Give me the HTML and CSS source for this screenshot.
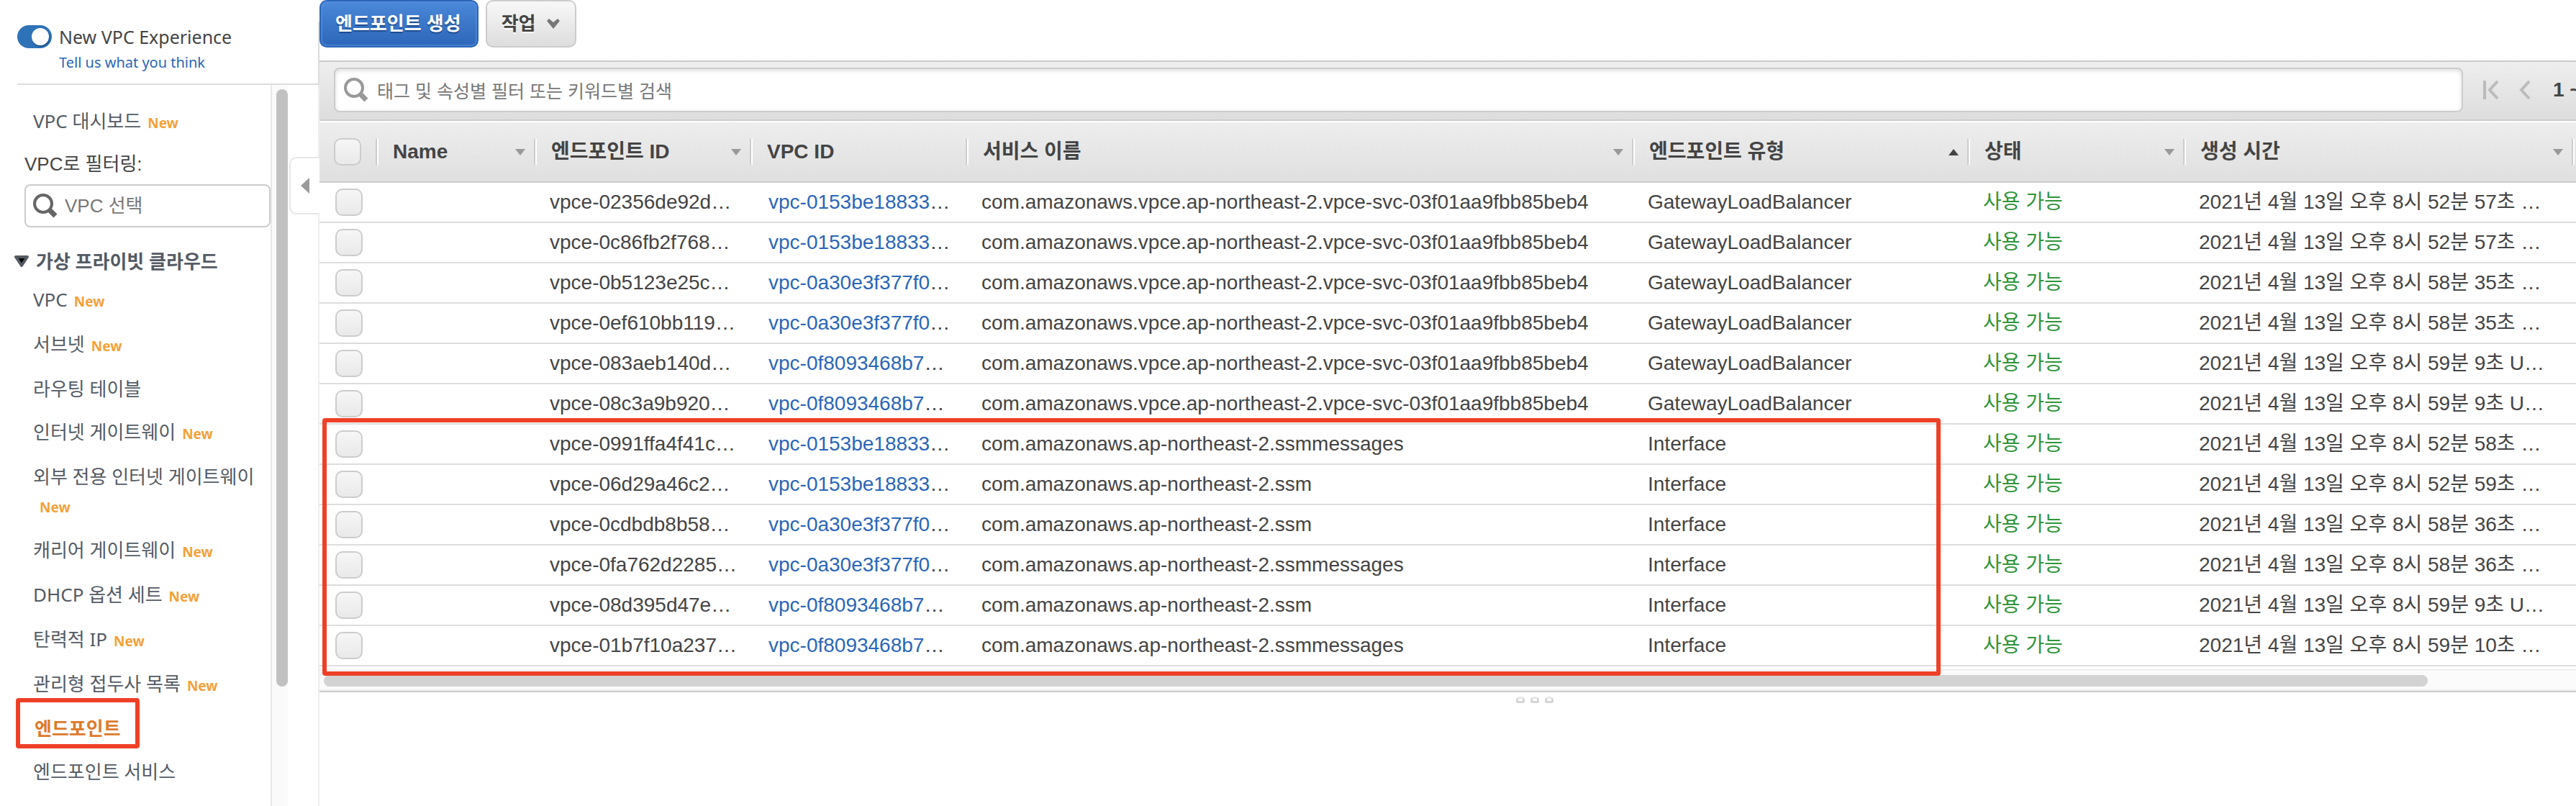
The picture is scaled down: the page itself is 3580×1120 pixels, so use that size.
FILE: index.html
```html
<!DOCTYPE html>
<html lang="ko">
<head>
<meta charset="utf-8">
<title>VPC 엔드포인트</title>
<link rel="stylesheet" href="styles.css">
</head>
<body>
<div class="app">
  <aside class="sidebar">
    <header class="experience">
      <label class="switch"><input type="checkbox" class="switch-input" checked><span>New VPC Experience</span></label>
      <a class="feedback" href="#">Tell us what you think</a>
    </header>
    <div class="sidebar-body">
      <nav class="nav">
        <ul class="nav-list nav-top">
          <li class="has-new"><a href="#">VPC 대시보드</a><span class="new">New</span></li>
        </ul>
        <label class="filter-label" for="vpc-filter">VPC로 필터링:</label>
        <div class="vpc-filter">
          <svg class="glass" viewBox="0 0 34 34" aria-hidden="true"><circle cx="14" cy="14" r="12"/><path d="M22 22l9 9"/></svg>
          <input id="vpc-filter" type="text" placeholder="VPC 선택">
        </div>
        <h2 class="group"><svg class="caret" viewBox="0 0 20 16" aria-hidden="true"><path d="M2 2h16l-8 12z"/></svg>가상 프라이빗 클라우드</h2>
        <ul class="nav-list">
          <li class="has-new"><a href="#">VPC</a><span class="new">New</span></li>
          <li class="has-new"><a href="#">서브넷</a><span class="new">New</span></li>
          <li><a href="#">라우팅 테이블</a></li>
          <li class="has-new"><a href="#">인터넷 게이트웨이</a><span class="new">New</span></li>
          <li class="has-new"><a href="#">외부 전용 인터넷 게이트웨이</a><span class="new">New</span></li>
          <li class="has-new"><a href="#">캐리어 게이트웨이</a><span class="new">New</span></li>
          <li class="has-new"><a href="#">DHCP 옵션 세트</a><span class="new">New</span></li>
          <li class="has-new"><a href="#">탄력적 IP</a><span class="new">New</span></li>
          <li class="has-new"><a href="#">관리형 접두사 목록</a><span class="new">New</span></li>
          <li class="current"><a href="#" aria-current="page">엔드포인트</a></li>
          <li><a href="#">엔드포인트 서비스</a></li>
          <li><a href="#">NAT 게이트웨이</a></li>
        </ul>
      </nav>
      <div class="track"><div class="thumb"></div></div>
    </div>
    <button class="collapse" type="button" aria-label="접기"><svg viewBox="0 0 12 22" aria-hidden="true"><path d="M12 0v22L0 11z"/></svg></button>
  </aside>

  <main class="main">
    <div class="toolbar">
      <button class="btn primary" type="button">엔드포인트 생성</button>
      <button class="btn" type="button">작업<svg class="chevron" viewBox="0 0 20 14" aria-hidden="true"><path d="M1 3l3-3 6 5 6-5 3 3-9 11z"/></svg></button>
    </div>
    <div class="filterbar">
      <div class="search">
        <svg class="glass light" viewBox="0 0 34 34" aria-hidden="true"><circle cx="14" cy="14" r="12"/><path d="M22 22l9 9"/></svg>
        <input type="text" aria-label="검색" placeholder="태그 및 속성별 필터 또는 키워드별 검색">
      </div>
      <div class="pager">
        <button type="button" aria-label="처음"><svg width="22" height="28" viewBox="0 0 22 28"><path d="M2 1v26M20 2L9 14l11 12"/></svg></button>
        <button type="button" aria-label="이전"><svg width="16" height="28" viewBox="0 0 16 28"><path d="M14 2L3 14l11 12"/></svg></button>
        <span class="range">1 ~</span>
      </div>
    </div>
    <div class="grid">
      <table>
        <colgroup><col class="c-check"><col class="c-name"><col class="c-mid"><col class="c-mid"><col><col class="c-type"><col class="c-mid"><col class="c-time"><col class="c-end"></colgroup>
        <thead>
          <tr>
            <th class="check"><input type="checkbox" aria-label="모두 선택"></th>
            <th><div class="head">Name<i class="sort"></i></div></th>
            <th><div class="head">엔드포인트 ID<i class="sort"></i></div></th>
            <th><div class="head">VPC ID</div></th>
            <th><div class="head">서비스 이름<i class="sort"></i></div></th>
            <th><div class="head">엔드포인트 유형<i class="sort up"></i></div></th>
            <th><div class="head">상태<i class="sort"></i></div></th>
            <th><div class="head">생성 시간<i class="sort"></i></div></th>
            <th><div class="head"></div></th>
          </tr>
        </thead>
        <tbody>
          <tr><td class="check"><input type="checkbox" aria-label="선택"></td><td></td><td>vpce-02356de92d…</td><td><a href="#">vpc-0153be18833</a>…</td><td>com.amazonaws.vpce.ap-northeast-2.vpce-svc-03f01aa9fbb85beb4</td><td>GatewayLoadBalancer</td><td class="ok">사용 가능</td><td>2021년 4월 13일 오후 8시 52분 57초 …</td><td></td></tr>
          <tr><td class="check"><input type="checkbox" aria-label="선택"></td><td></td><td>vpce-0c86fb2f768…</td><td><a href="#">vpc-0153be18833</a>…</td><td>com.amazonaws.vpce.ap-northeast-2.vpce-svc-03f01aa9fbb85beb4</td><td>GatewayLoadBalancer</td><td class="ok">사용 가능</td><td>2021년 4월 13일 오후 8시 52분 57초 …</td><td></td></tr>
          <tr><td class="check"><input type="checkbox" aria-label="선택"></td><td></td><td>vpce-0b5123e25c…</td><td><a href="#">vpc-0a30e3f377f0</a>…</td><td>com.amazonaws.vpce.ap-northeast-2.vpce-svc-03f01aa9fbb85beb4</td><td>GatewayLoadBalancer</td><td class="ok">사용 가능</td><td>2021년 4월 13일 오후 8시 58분 35초 …</td><td></td></tr>
          <tr><td class="check"><input type="checkbox" aria-label="선택"></td><td></td><td>vpce-0ef610bb119…</td><td><a href="#">vpc-0a30e3f377f0</a>…</td><td>com.amazonaws.vpce.ap-northeast-2.vpce-svc-03f01aa9fbb85beb4</td><td>GatewayLoadBalancer</td><td class="ok">사용 가능</td><td>2021년 4월 13일 오후 8시 58분 35초 …</td><td></td></tr>
          <tr><td class="check"><input type="checkbox" aria-label="선택"></td><td></td><td>vpce-083aeb140d…</td><td><a href="#">vpc-0f8093468b7</a>…</td><td>com.amazonaws.vpce.ap-northeast-2.vpce-svc-03f01aa9fbb85beb4</td><td>GatewayLoadBalancer</td><td class="ok">사용 가능</td><td>2021년 4월 13일 오후 8시 59분 9초 U…</td><td></td></tr>
          <tr><td class="check"><input type="checkbox" aria-label="선택"></td><td></td><td>vpce-08c3a9b920…</td><td><a href="#">vpc-0f8093468b7</a>…</td><td>com.amazonaws.vpce.ap-northeast-2.vpce-svc-03f01aa9fbb85beb4</td><td>GatewayLoadBalancer</td><td class="ok">사용 가능</td><td>2021년 4월 13일 오후 8시 59분 9초 U…</td><td></td></tr>
          <tr><td class="check"><input type="checkbox" aria-label="선택"></td><td></td><td>vpce-0991ffa4f41c…</td><td><a href="#">vpc-0153be18833</a>…</td><td>com.amazonaws.ap-northeast-2.ssmmessages</td><td>Interface</td><td class="ok">사용 가능</td><td>2021년 4월 13일 오후 8시 52분 58초 …</td><td></td></tr>
          <tr><td class="check"><input type="checkbox" aria-label="선택"></td><td></td><td>vpce-06d29a46c2…</td><td><a href="#">vpc-0153be18833</a>…</td><td>com.amazonaws.ap-northeast-2.ssm</td><td>Interface</td><td class="ok">사용 가능</td><td>2021년 4월 13일 오후 8시 52분 59초 …</td><td></td></tr>
          <tr><td class="check"><input type="checkbox" aria-label="선택"></td><td></td><td>vpce-0cdbdb8b58…</td><td><a href="#">vpc-0a30e3f377f0</a>…</td><td>com.amazonaws.ap-northeast-2.ssm</td><td>Interface</td><td class="ok">사용 가능</td><td>2021년 4월 13일 오후 8시 58분 36초 …</td><td></td></tr>
          <tr><td class="check"><input type="checkbox" aria-label="선택"></td><td></td><td>vpce-0fa762d2285…</td><td><a href="#">vpc-0a30e3f377f0</a>…</td><td>com.amazonaws.ap-northeast-2.ssmmessages</td><td>Interface</td><td class="ok">사용 가능</td><td>2021년 4월 13일 오후 8시 58분 36초 …</td><td></td></tr>
          <tr><td class="check"><input type="checkbox" aria-label="선택"></td><td></td><td>vpce-08d395d47e…</td><td><a href="#">vpc-0f8093468b7</a>…</td><td>com.amazonaws.ap-northeast-2.ssm</td><td>Interface</td><td class="ok">사용 가능</td><td>2021년 4월 13일 오후 8시 59분 9초 U…</td><td></td></tr>
          <tr><td class="check"><input type="checkbox" aria-label="선택"></td><td></td><td>vpce-01b7f10a237…</td><td><a href="#">vpc-0f8093468b7</a>…</td><td>com.amazonaws.ap-northeast-2.ssmmessages</td><td>Interface</td><td class="ok">사용 가능</td><td>2021년 4월 13일 오후 8시 59분 10초 …</td><td></td></tr>
        </tbody>
      </table>
      <div class="hscroll"><div class="hthumb"></div></div>
      <div class="marker"></div>
    </div>
    <div class="splitter"><i></i><i></i><i></i></div>
  </main>
</div>
</body>
</html>
```
FILE: styles.css
```css
*, *::before, *::after { box-sizing: border-box; }
body {
  margin: 0;
  background: #fff;
  color: #444;
  font: 28px/36px "Liberation Sans", "Noto Sans CJK KR", sans-serif;
}
a { color: #2a66b8; text-decoration: none; }
button, input { font: inherit; color: inherit; margin: 0; }
button { cursor: pointer; }
ul { list-style: none; margin: 0; padding: 0; }

.app { display: flex; height: 100vh; overflow: hidden; }

/* Sidebar */
.sidebar {
  position: relative;
  flex: none;
  width: 444px;
  display: flex;
  flex-direction: column;
  font-family: "Noto Sans", "Noto Sans CJK KR", sans-serif;
}
.experience {
  flex: none;
  margin: 30px 0 0 24px;
  height: 88px;
  border-right: 2px solid #ddd;
  border-bottom: 2px solid #ddd;
}
.switch {
  display: flex;
  align-items: center;
  gap: 10px;
  height: 42px;
  font-size: 25px;
}
.switch-input {
  appearance: none;
  width: 48px;
  height: 32px;
  padding: 4px;
  border-radius: 16px;
  background: #2e73b8;
  display: flex;
  justify-content: flex-end;
}
.switch-input::before {
  content: "";
  width: 24px;
  height: 24px;
  border-radius: 12px;
  background: #fff;
  box-shadow: 1px 2px 2px #1d5488;
}
.feedback { display: block; margin-left: 58px; font-size: 20px; line-height: 30px; }

.sidebar-body {
  flex: 1;
  min-height: 0;
  display: flex;
  border-right: 2px solid #eee;
}
.nav {
  flex: none;
  width: 378px;
  overflow: hidden;
  border-right: 2px solid #e7e7e7;
  font-size: 26px;
  word-break: keep-all;
}
.nav-list { padding-left: 46px; }
.nav-top { padding-top: 30px; }
.nav-list li { position: relative; line-height: 40px; margin-bottom: 20px; }
.nav-list li.has-new { margin-bottom: 22px; }
.nav-list a { color: #545b64; }
.new {
  display: inline-block;
  margin-left: 9px;
  color: #f3a13a;
  font-size: 19px;
  line-height: 20px;
  font-weight: 700;
}
.nav-list .current a { margin-left: 2px; color: #dd7a2c; font-weight: 700; }
.current::after {
  content: "";
  position: absolute;
  left: -24px;
  top: -22px;
  width: 172px;
  height: 70px;
  border: 6px solid #ee4027;
  border-radius: 4px;
}
.filter-label {
  display: block;
  padding-left: 34px;
  margin-bottom: 10px;
  font-family: "Liberation Sans", "Noto Sans CJK KR", sans-serif;
}
.vpc-filter {
  display: flex;
  align-items: center;
  height: 60px;
  margin-left: 34px;
  padding-left: 10px;
  border: 2px solid #ccc;
  border-radius: 8px;
  font-family: "Liberation Sans", "Noto Sans CJK KR", sans-serif;
}
.vpc-filter input, .search input {
  flex: 1;
  min-width: 0;
  border: 0;
  padding: 0;
  background: none;
  outline: none;
}
.vpc-filter input { margin-left: 10px; }
::placeholder { color: #777; opacity: 1; }
.glass {
  flex: none;
  width: 34px;
  height: 34px;
  fill: none;
  stroke: #666;
  stroke-width: 4;
}
.glass path { stroke-width: 7; }
.glass.light { stroke: #999; }
.group {
  display: flex;
  align-items: center;
  gap: 10px;
  margin: 29px 0 15px 20px;
  color: #545b64;
  font-size: 26px;
  line-height: 36px;
}
.caret {
  width: 20px;
  height: 16px;
  fill: #000;
  stroke: #545b64;
  stroke-width: 4;
  stroke-linejoin: round;
}
.track {
  width: 22px;
  padding: 6px 0 0 6px;
  background: #fafafa;
}
.thumb { height: 830px; border-radius: 8px; background: #c1c1c1; }
.collapse {
  position: absolute;
  right: 0;
  top: 218px;
  width: 42px;
  height: 80px;
  padding: 0 0 0 14px;
  display: flex;
  align-items: center;
  background: #fff;
  border: 2px solid #e7e7e7;
  border-right: 0;
  border-radius: 10px 0 0 10px;
}
.collapse svg { width: 12px; height: 22px; fill: #999; }

/* Main panel */
.main { flex: 1; min-width: 0; overflow: hidden; }
.toolbar { display: flex; gap: 10px; height: 84px; align-items: flex-start; }
.btn {
  display: flex;
  align-items: center;
  gap: 14px;
  height: 66px;
  padding: 0 20px;
  border: 2px solid #ccc;
  border-radius: 10px;
  background: linear-gradient(#f8f8f8, #ddd);
  color: #444;
  font-size: 26px;
  font-weight: 700;
  text-shadow: 0 2px 0 #fff;
}
.btn.primary {
  padding: 0 22px 0 20px;
  border-color: #2a65b8;
  background: linear-gradient(#4a88da, #2d66b8);
  box-shadow: inset 0 0 3px 1px #5b93dc;
  color: #fff;
  text-shadow: 0 2px 1px #1d4a8c;
}
.chevron { width: 20px; height: 14px; fill: #777; }

.filterbar {
  display: flex;
  align-items: flex-start;
  height: 84px;
  padding: 8px 0 0 20px;
  border-top: 2px solid #ccc;
  border-bottom: 2px solid #ccc;
  background: linear-gradient(#eee, #ddd);
}
.search {
  flex: 1;
  display: flex;
  align-items: center;
  height: 62px;
  padding-left: 12px;
  border: 2px solid #ccc;
  border-radius: 8px;
  background: #fff;
  box-shadow: inset 0 2px 6px #ddd;
}
.search input {
  margin-left: 12px;
  font-family: "Noto Sans CJK KR", sans-serif;
  font-size: 25px;
}
.pager {
  flex: none;
  width: 157px;
  height: 62px;
  padding-left: 28px;
  display: flex;
  align-items: center;
  overflow: hidden;
  white-space: nowrap;
}
.pager button { flex: none; display: flex; padding: 0; border: 0; background: none; }
.pager button + button { margin-left: 28px; }
.pager svg { fill: none; stroke: #bbb; stroke-width: 4; }
.range { margin-left: 31px; font-weight: 700; }

.grid { position: relative; }
table { width: 100%; table-layout: fixed; border-collapse: separate; border-spacing: 0; }
.c-check { width: 78px; }
.c-name { width: 220px; }
.c-mid { width: 300px; }
.c-type { width: 466px; }
.c-time { width: 540px; }
.c-end { width: 6px; }
thead tr { background: linear-gradient(#eee, #dfdfdf); }
th {
  height: 86px;
  padding: 0;
  border-top: 2px solid #fff;
  border-bottom: 2px solid #ccc;
  text-align: left;
}
.head {
  display: flex;
  align-items: center;
  justify-content: space-between;
  height: 36px;
  padding: 0 12px 0 22px;
  border-left: 2px solid #ccc;
  box-shadow: inset 2px 0 0 #fff;
  white-space: nowrap;
}
th:last-child .head { padding: 0; }
.sort { border: 7px solid transparent; border-top: 9px solid #999; border-bottom: 0; }
.sort.up { border-top: 0; border-bottom: 9px solid #444; }
td {
  height: 56px;
  padding: 0 0 0 22px;
  border-bottom: 2px solid #ddd;
  white-space: nowrap;
}
td:last-child { padding: 0; }
td a { margin-left: 4px; }
.ok { color: #2f9439; }
.check { padding: 0 0 0 20px; }
td.check { padding-left: 22px; }
.check input {
  appearance: none;
  display: block;
  width: 38px;
  height: 38px;
  border: 2px solid #ccc;
  border-radius: 10px;
  background: linear-gradient(#f6f6f6, #e9e9e9);
}
.hscroll {
  height: 30px;
  margin-top: 4px;
  padding: 6px 206px 0 6px;
  border-top: 2px solid #eee;
  border-bottom: 2px solid #eee;
  background: #fbfbfb;
}
.hthumb { height: 16px; border-radius: 8px; background: #d3d3d3; }
.marker {
  position: absolute;
  left: 4px;
  right: 883px;
  top: 413px;
  height: 358px;
  border: 6px solid #ee4027;
  border-radius: 4px;
}
/* The pane runs past the right edge of the window, so its handle sits right of centre. */
.splitter {
  display: flex;
  justify-content: center;
  gap: 8px;
  margin-right: -242px;
  padding-top: 6px;
  border-top: 2px solid #ccc;
}
.splitter i {
  width: 12px;
  height: 9px;
  border: 3px solid #d5d5d5;
  border-top-color: #e8e8e8;
  border-radius: 5px 5px 3px 3px;
}
```
